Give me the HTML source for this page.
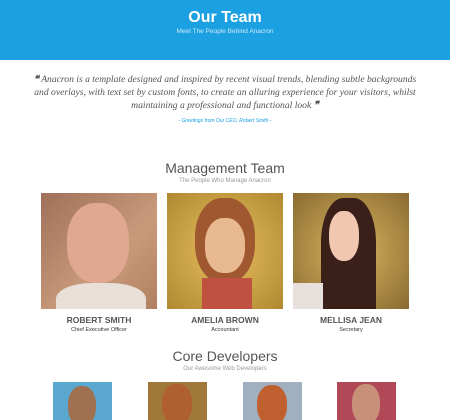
<!DOCTYPE html><html><head><style>
body{margin:0;width:450px;height:420px;overflow:hidden;background:#fff;font-family:"Liberation Sans",sans-serif;position:relative}
.a{position:absolute}
.hd{left:0;top:0;width:450px;height:60px;background:#1ba0e1}
.c{text-align:center;left:0;width:450px}
.p{overflow:hidden}
</style></head><body>
<div class="a hd"></div>
<div class="a c" style="top:9px;color:#fff;font-size:16px;font-weight:bold">Our Team</div>
<div class="a c" style="top:28px;color:#cfeafa;font-size:6.5px">Meet The People Behind Anacron</div>
<div class="a c" style="top:73px;left:30px;width:390px;font-family:'Liberation Serif',serif;font-style:italic;font-size:9.6px;line-height:13px;color:#555"><b>❝</b> Anacron is a template designed and inspired by recent visual trends, blending subtle backgrounds and overlays, with text set by custom fonts, to create an alluring experience for your visitors, whilst maintaining a professional and functional look <b>❞</b></div>
<div class="a c" style="top:118px;font-size:5px;color:#1ba0e1;font-style:italic">- Greetings from Our CEO, Robert Smith -</div>
<div class="a c" style="top:160px;font-size:14px;color:#555">Management Team</div>
<div class="a c" style="top:178px;font-size:6px;color:#999">The People Who Manage Anacron</div>

<div class="a p" style="left:41px;top:193px;width:116px;height:116px;background:linear-gradient(135deg,#a0705a,#c99a7a 60%,#b08060)"><div class="a" style="left:26px;top:10px;width:62px;height:80px;border-radius:45%;background:#e0a890"></div><div class="a" style="left:15px;top:90px;width:90px;height:40px;border-radius:40% 40% 0 0;background:#e8e0d8"></div></div>
<div class="a p" style="left:167px;top:193px;width:116px;height:116px;background:radial-gradient(#e8c060,#b08830)"><div class="a" style="left:28px;top:5px;width:60px;height:85px;border-radius:45%;background:#a05830"></div><div class="a" style="left:38px;top:25px;width:40px;height:55px;border-radius:45%;background:#e8b890"></div><div class="a" style="left:35px;top:85px;width:50px;height:31px;background:#c05040"></div></div>
<div class="a p" style="left:293px;top:193px;width:116px;height:116px;background:radial-gradient(#d8b860,#8a6a30)"><div class="a" style="left:28px;top:5px;width:55px;height:111px;border-radius:40% 40% 0 0;background:#3a2018"></div><div class="a" style="left:36px;top:18px;width:30px;height:50px;border-radius:45%;background:#f0c8b0"></div><div class="a" style="left:0;top:90px;width:30px;height:26px;background:#e8e0dc"></div></div>

<div class="a" style="left:41px;top:315px;width:116px;text-align:center;font-size:8.5px;font-weight:bold;color:#555">ROBERT SMITH</div>
<div class="a" style="left:41px;top:327px;width:116px;text-align:center;font-size:5.5px;color:#333">Chief Executive Officer</div>
<div class="a" style="left:167px;top:315px;width:116px;text-align:center;font-size:8.5px;font-weight:bold;color:#555">AMELIA BROWN</div>
<div class="a" style="left:167px;top:327px;width:116px;text-align:center;font-size:5.5px;color:#333">Accountant</div>
<div class="a" style="left:293px;top:315px;width:116px;text-align:center;font-size:8.5px;font-weight:bold;color:#555">MELLISA JEAN</div>
<div class="a" style="left:293px;top:327px;width:116px;text-align:center;font-size:5.5px;color:#333">Secretary</div>

<div class="a c" style="top:348px;font-size:14px;color:#555">Core Developers</div>
<div class="a c" style="top:366px;font-size:6px;color:#999">Our Awesome Web Developers</div>

<div class="a p" style="left:53px;top:382px;width:59px;height:38px;background:#5aa8d0"><div class="a" style="left:15px;top:4px;width:28px;height:40px;border-radius:45%;background:#a07050"></div></div>
<div class="a p" style="left:148px;top:382px;width:59px;height:38px;background:#a07838"><div class="a" style="left:14px;top:2px;width:30px;height:40px;border-radius:45%;background:#b06030"></div></div>
<div class="a p" style="left:243px;top:382px;width:59px;height:38px;background:#a0b0c0"><div class="a" style="left:14px;top:3px;width:30px;height:40px;border-radius:45%;background:#c06030"></div></div>
<div class="a p" style="left:337px;top:382px;width:59px;height:38px;background:#b04858"><div class="a" style="left:15px;top:2px;width:28px;height:40px;border-radius:45%;background:#c89078"></div></div>
</body></html>
